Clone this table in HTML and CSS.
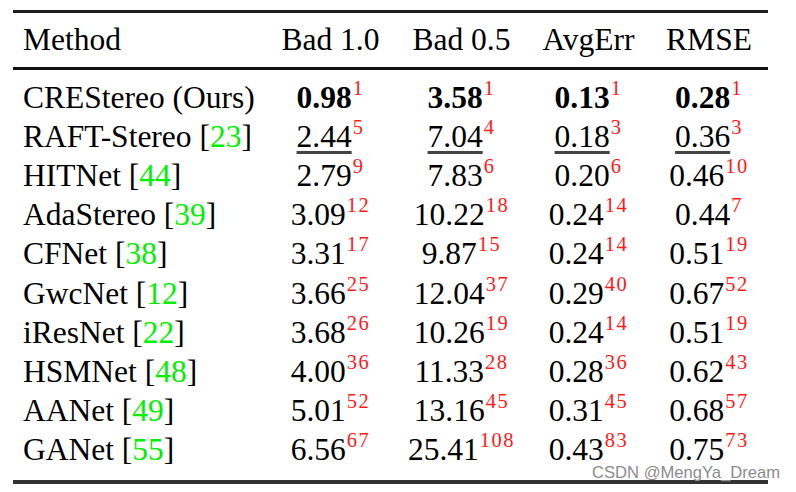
FILE: index.html
```html
<!DOCTYPE html>
<html>
<head>
<meta charset="utf-8">
<link rel="stylesheet" href="styles.css">
</head>
<body>
<div class="page">
<table class="results">
  <colgroup>
    <col class="c-method"><col class="c-b1"><col class="c-b05"><col class="c-avg"><col class="c-rmse">
  </colgroup>
  <thead>
    <tr><th class="name">Method</th><th>Bad 1.0</th><th>Bad 0.5</th><th>AvgErr</th><th>RMSE</th></tr>
  </thead>
  <tbody>
    <tr class="first"><td class="name">CREStereo (Ours)</td><td><b>0.98</b><sup>1</sup></td><td><b>3.58</b><sup>1</sup></td><td><b>0.13</b><sup>1</sup></td><td><b>0.28</b><sup>1</sup></td></tr>
    <tr><td class="name">RAFT-Stereo [<span class="cite">23</span>]</td><td><u>2.44</u><sup>5</sup></td><td><u>7.04</u><sup>4</sup></td><td><u>0.18</u><sup>3</sup></td><td><u>0.36</u><sup>3</sup></td></tr>
    <tr><td class="name">HITNet [<span class="cite">44</span>]</td><td>2.79<sup>9</sup></td><td>7.83<sup>6</sup></td><td>0.20<sup>6</sup></td><td>0.46<sup>10</sup></td></tr>
    <tr><td class="name">AdaStereo [<span class="cite">39</span>]</td><td>3.09<sup>12</sup></td><td>10.22<sup>18</sup></td><td>0.24<sup>14</sup></td><td>0.44<sup>7</sup></td></tr>
    <tr><td class="name">CFNet [<span class="cite">38</span>]</td><td>3.31<sup>17</sup></td><td>9.87<sup>15</sup></td><td>0.24<sup>14</sup></td><td>0.51<sup>19</sup></td></tr>
    <tr><td class="name">GwcNet [<span class="cite">12</span>]</td><td>3.66<sup>25</sup></td><td>12.04<sup>37</sup></td><td>0.29<sup>40</sup></td><td>0.67<sup>52</sup></td></tr>
    <tr><td class="name">iResNet [<span class="cite">22</span>]</td><td>3.68<sup>26</sup></td><td>10.26<sup>19</sup></td><td>0.24<sup>14</sup></td><td>0.51<sup>19</sup></td></tr>
    <tr><td class="name">HSMNet [<span class="cite">48</span>]</td><td>4.00<sup>36</sup></td><td>11.33<sup>28</sup></td><td>0.28<sup>36</sup></td><td>0.62<sup>43</sup></td></tr>
    <tr><td class="name">AANet [<span class="cite">49</span>]</td><td>5.01<sup>52</sup></td><td>13.16<sup>45</sup></td><td>0.31<sup>45</sup></td><td>0.68<sup>57</sup></td></tr>
    <tr class="last"><td class="name">GANet [<span class="cite">55</span>]</td><td>6.56<sup>67</sup></td><td>25.41<sup>108</sup></td><td>0.43<sup>83</sup></td><td>0.75<sup>73</sup></td></tr>
  </tbody>
</table>
<div class="watermark">CSDN @MengYa_Dream</div>
</div>
</body>
</html>
```

FILE: styles.css
```css
html, body {
  margin: 0;
  padding: 0;
  background: #ffffff;
}
.page {
  position: relative;
  width: 796px;
  height: 492px;
  overflow: hidden;
}
.results {
  margin: 10px 0 0 13px;
  width: 755px;
  border-collapse: separate;
  border-spacing: 0;
  table-layout: fixed;
  border-top: 3px solid #1e1e1e;
  border-bottom: 4px solid #333333;
  font-family: "Liberation Serif", "Times New Roman", serif;
  font-size: 31.5px;
  color: #000;
}
.c-method { width: 252px; }
.c-b1 { width: 131px; }
.c-b05 { width: 131px; }
.c-avg { width: 123px; }
.c-rmse { width: 118px; }
.results th, .results td {
  padding: 0;
  line-height: 39.1px;
  text-align: center;
  white-space: nowrap;
  font-weight: normal;
}
.results th {
  padding-top: 7px;
  padding-bottom: 8px;
  border-bottom: 3px solid #111;
}
.results .name {
  text-align: left;
  padding-left: 10px;
}
.results tr.first td { padding-top: 8px; }
.results tr.last td { padding-bottom: 11px; }
.results b { font-weight: bold; }
.results u {
  text-decoration: underline;
  text-decoration-color: #444;
  text-decoration-thickness: 2.5px;
  text-underline-offset: 4px;
}
.results sup {
  font-size: 20.5px;
  line-height: 0;
  vertical-align: 13px;
  color: #ff1a1a;
  letter-spacing: 1.5px;
  margin-left: 1px;
}
.cite { color: #00f000; }
.watermark {
  position: absolute;
  left: 592px;
  top: 467px;
  font-family: "Liberation Sans", Arial, sans-serif;
  font-size: 16.6px;
  color: #8c8c8c;
  line-height: 12px;
}
```
